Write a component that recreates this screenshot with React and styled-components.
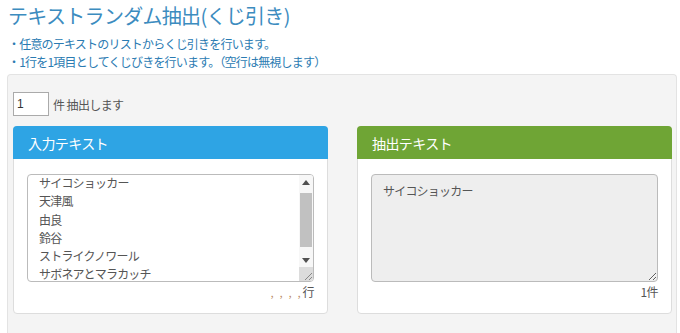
import { useEffect, useRef } from "react";
import styled, { createGlobalStyle } from "styled-components";

const GlobalStyle = createGlobalStyle`
  html, body {
    margin: 0;
    padding: 0;
    overflow: hidden;
    background: #fff;
  }
  body {
    font-family: "Noto Sans CJK JP", "Noto Sans", sans-serif;
    color: #555;
  }
`;

const Page = styled.div`
  width: 680px;
  height: 333px;
  padding: 0 3px 0 7px;
  box-sizing: border-box;
  display: flex;
  flex-direction: column;
`;

const Title = styled.h1`
  margin: 0 0 0 1px;
  height: 32px;
  font-size: 20px;
  line-height: 32px;
  font-weight: normal;
  color: #3c8cbf;
  letter-spacing: -0.7px;
`;

const Notes = styled.ul`
  list-style: none;
  margin: 3px 0 0 1px;
  padding: 0;
  height: 39px;
`;

const Note = styled.li`
  font-size: 12px;
  line-height: 18px;
  color: #2b7bb2;
  letter-spacing: -0.8px;
`;

const Well = styled.div`
  flex: 1;
  background: #f4f4f4;
  border: 1px solid #e3e3e3;
  border-bottom: none;
  border-radius: 4px 4px 0 0;
  padding: 17px 4px 0 5px;
`;

const CountRow = styled.div`
  display: flex;
  align-items: center;
  gap: 4px;
  height: 24px;
  font-size: 12px;
  color: #555;
  letter-spacing: -0.6px;
`;

const CountInput = styled.input`
  width: 36px;
  height: 24px;
  box-sizing: border-box;
  border: 1px solid #aaa;
  padding: 0 3px;
  font-family: "Liberation Sans", sans-serif;
  font-size: 12px;
  color: #333;
  background: #fff;
`;

const Columns = styled.div`
  display: grid;
  grid-template-columns: 315px 315px;
  column-gap: 29px;
  margin-top: 10px;
`;

const Card = styled.section`
  background: #fff;
  border: 1px solid #ddd;
  border-radius: 4px;
  height: 188px;
  box-sizing: border-box;
`;

const CardHead = styled.div`
  height: 33px;
  margin: -1px -1px 0;
  padding: 0 15px;
  display: flex;
  align-items: center;
  background: ${(p) => p.$color};
  border-radius: 4px 4px 0 0;
  color: #fff;
  font-size: 14px;
  letter-spacing: -0.6px;
`;

const CardBody = styled.div`
  padding: 15px 13px 0 13px;
`;

const AreaWrap = styled.div`
  position: relative;
`;

const Area = styled.textarea`
  display: block;
  width: 100%;
  height: 108px;
  box-sizing: border-box;
  margin: 0;
  border: 1px solid #bbb;
  border-radius: 4px;
  padding: ${(p) => (p.readOnly ? "7px 11px" : "6px 26px 6px 11px")};
  font-family: "Noto Sans CJK JP", sans-serif;
  font-size: 12px;
  line-height: 18.3px;
  letter-spacing: -0.8px;
  color: #555;
  background: ${(p) => (p.readOnly ? "#eeeeee" : "#fff")};
  overflow: hidden;
  outline: none;
  scrollbar-width: none;
`;

/* classic scrollbar drawn over the textarea's right edge */
const Rail = styled.div`
  position: absolute;
  top: 1px;
  right: 1px;
  bottom: 1px;
  width: 14px;
  display: flex;
  flex-direction: column;
  background: #f7f7f7;
  pointer-events: none;
  border-radius: 0 3px 3px 0;
  overflow: hidden;
`;

const RailButton = styled.div`
  height: 14px;
  flex: none;
  display: flex;
  align-items: center;
  justify-content: center;
`;

const Track = styled.div`
  flex: 1;
  padding: 4px 1px 6px;
  display: flex;
  flex-direction: column;
`;

const Thumb = styled.div`
  height: 54px;
  background: #c1c1c1;
`;

const Corner = styled.div`
  height: 14px;
  flex: none;
  background: #dcdcdc;
  display: flex;
  align-items: flex-end;
  justify-content: flex-end;
`;

const Counter = styled.div`
  text-align: right;
  font-size: 12px;
  line-height: 20px;
  color: #555;
  letter-spacing: -0.6px;
`;

const Dots = styled.span`
  color: #b98a62;
  font-size: 10px;
  letter-spacing: 2px;
`;

const Arrow = ({ down }) => (
  <svg width="8" height="5" viewBox="0 0 8 5">
    <polygon points={down ? "0,0 8,0 4,5" : "0,5 8,5 4,0"} fill="#505050" />
  </svg>
);

const Grip = () => (
  <svg width="10" height="10" viewBox="0 0 10 10">
    <line x1="2" y1="9" x2="9" y2="2" stroke="#888" strokeWidth="1" />
    <line x1="6" y1="9" x2="9" y2="6" stroke="#888" strokeWidth="1" />
  </svg>
);

const items = [
  "サイコショッカー",
  "天津風",
  "由良",
  "鈴谷",
  "ストライクノワール",
  "サボネアとマラカッチ",
  "",
  "",
].join("\n");

export default function App() {
  const inputRef = useRef(null);

  useEffect(() => {
    if (inputRef.current) inputRef.current.scrollTop = 7;
  }, []);

  return (
    <Page>
      <GlobalStyle />
      <Title>テキストランダム抽出(くじ引き)</Title>
      <Notes>
        <Note>・任意のテキストのリストからくじ引きを行います。</Note>
        <Note>・1行を1項目としてくじびきを行います。（空行は無視します）</Note>
      </Notes>
      <Well>
        <CountRow>
          <CountInput defaultValue="1" />
          <span>件 抽出します</span>
        </CountRow>
        <Columns>
          <Card>
            <CardHead $color="#2ea4e4">入力テキスト</CardHead>
            <CardBody>
              <AreaWrap>
                <Area ref={inputRef} defaultValue={items} />
                <Rail>
                  <RailButton>
                    <Arrow />
                  </RailButton>
                  <Track>
                    <Thumb />
                  </Track>
                  <RailButton>
                    <Arrow down />
                  </RailButton>
                  <Corner>
                    <Grip />
                  </Corner>
                </Rail>
              </AreaWrap>
              <Counter>
                <Dots>, , , ,</Dots>行
              </Counter>
            </CardBody>
          </Card>
          <Card>
            <CardHead $color="#6fa535">抽出テキスト</CardHead>
            <CardBody>
              <Area readOnly value="サイコショッカー" />
              <Counter>1件</Counter>
            </CardBody>
          </Card>
        </Columns>
      </Well>
    </Page>
  );
}
